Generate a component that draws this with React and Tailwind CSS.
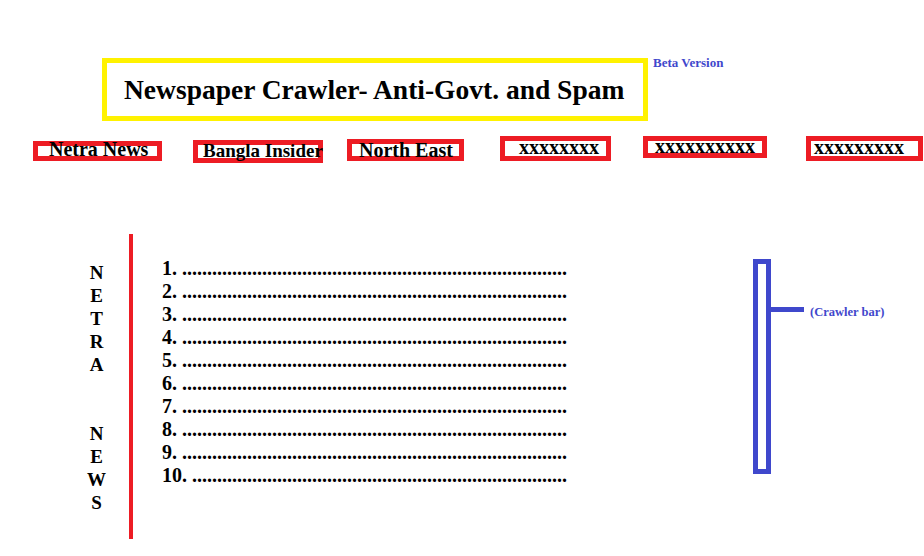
const sources = [
  { label: "Netra News", box: "ml-[33px] mt-[5px] w-[129px] h-[20px]", text: "text-[20px] ml-[11px] mt-[-7px]" },
  { label: "Bangla Insider", box: "ml-[31px] mt-[4px] w-[130px] h-[23px]", text: "text-[19px] ml-[5px] mt-[-4px]" },
  { label: "North East", box: "ml-[24px] mt-[3px] w-[117px] h-[22px]", text: "text-[20px] ml-[7px] mt-[-4px]" },
  { label: "xxxxxxxx", box: "ml-[36px] mt-0 w-[111px] h-[25px]", text: "text-[20px] ml-[14px] mt-[-4px]" },
  { label: "xxxxxxxxxx", box: "ml-[32px] mt-0 w-[124px] h-[22px]", text: "text-[20px] ml-[7px] mt-[-5px]" },
  { label: "xxxxxxxxx", box: "ml-[39px] mt-0 w-[117px] h-[25px]", text: "text-[20px] ml-[3px] mt-[-4px]" },
];

const letters = ["N", "E", "T", "R", "A", "", "", "N", "E", "W", "S"];

const items = Array.from({ length: 10 }, (_, i) => i + 1);

export default function App() {
  return (
    <div className="w-[924px] h-[556px] bg-white overflow-hidden font-['Liberation_Serif',serif] font-bold text-black">
      {/* Title */}
      <div className="flex items-start pt-[58px] pl-[102px]">
        <div className="flex items-center w-[546px] h-[63px] border-[5px] border-[#FFF200] pl-[17px]">
          <h1 className="text-[27.5px] leading-none whitespace-nowrap">
            Newspaper Crawler- Anti-Govt. and Spam
          </h1>
        </div>
        <span className="ml-[5px] -mt-[2px] text-[13px] leading-none text-[#3F48CC] whitespace-nowrap">
          Beta Version
        </span>
      </div>

      {/* Sources */}
      <nav className="flex items-start mt-[15px] h-[27px]">
        {sources.map((s, i) => (
          <div
            key={i}
            className={`shrink-0 flex items-start border-[5px] border-[#ED1C24] ${s.box}`}
          >
            <span className={`leading-[20px] whitespace-nowrap ${s.text}`}>
              {s.label}
            </span>
          </div>
        ))}
      </nav>

      {/* Body */}
      <div className="flex items-start mt-[71px]">
        <div className="ml-[86px] w-[21px] pt-[27px] text-center text-[19px] leading-[23px]">
          {letters.map((l, i) => (
            <div key={i} className="h-[23px]">{l}</div>
          ))}
        </div>

        <div className="ml-[22px] w-[4px] h-[305px] bg-[#ED1C24]" />

        <ol className="ml-[29px] w-[591px] pt-[23px] text-[20px] leading-[23px]">
          {items.map((n) => (
            <li key={n} className="whitespace-nowrap">
              {n}. {".".repeat(n === 10 ? 75 : 77)}
            </li>
          ))}
        </ol>

        {/* Crawler bar */}
        <div className="flex items-start pt-[25px]">
          <div className="w-[18px] h-[215px] border-[5px] border-[#3F48CC]" />
          <div className="mt-[48px] w-[33px] h-[5px] bg-[#3F48CC]" />
          <span className="ml-[6px] mt-[47px] text-[12.5px] leading-none text-[#3F48CC] whitespace-nowrap">
            (Crawler bar)
          </span>
        </div>
      </div>
    </div>
  );
}
